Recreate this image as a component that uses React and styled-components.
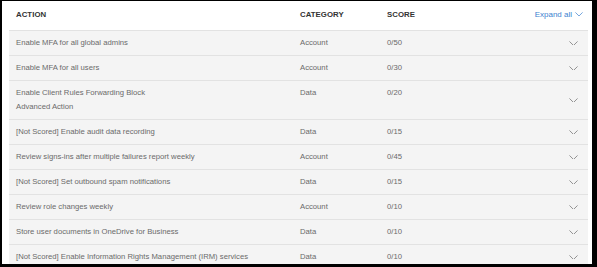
import React from "react";
import styled, { createGlobalStyle } from "styled-components";

const Global = createGlobalStyle`
  html, body { margin: 0; padding: 0; background: #000; }
  body { font-family: "Liberation Sans", Arial, Helvetica, sans-serif; }
  #root { width: 597px; height: 267px; overflow: hidden; }
`;

const Panel = styled.div`
  margin: 1px 5px 0 2px;
  height: 263px;
  background: #fff;
  padding: 0 4px 0 7px;
  overflow: hidden;
  box-sizing: border-box;
`;

const cols = "284px 87px 1fr 24px";

const Header = styled.div`
  display: grid;
  grid-template-columns: 284px 87px 1fr auto;
  align-items: center;
  height: 29px;
  padding: 0 0 2px 7px;
  box-sizing: border-box;
`;

const HeadCell = styled.div`
  font-size: 7.8px;
  font-weight: bold;
  color: #333;
  letter-spacing: 0.05px;
`;

const ExpandAll = styled.div`
  display: flex;
  align-items: center;
  gap: 3px;
  margin-right: 5px;
  color: #3d82cf;
  font-size: 8px;
`;

const Row = styled.div`
  display: grid;
  grid-template-columns: ${cols};
  align-items: start;
  background: #f4f4f4;
  border-top: 1px solid #e2e2e2;
  padding: 5px 0 5px 7px;
`;

const Cell = styled.div`
  font-size: 7.7px;
  line-height: 14px;
  color: #6a6a6a;
`;

const ActionCell = styled(Cell)`
  display: flex;
  flex-direction: column;
`;

const ChevronCell = styled.div`
  align-self: center;
  display: flex;
  justify-content: center;
  padding-right: 6px;
`;

const Chevron = ({ color = "#7a7a7a", w = 9 }) => (
  <svg width={w} height={w * 0.55} viewBox="0 0 10 5.5" fill="none">
    <path d="M0.5 0.5 L5 5 L9.5 0.5" stroke={color} strokeWidth="0.9" />
  </svg>
);

const rows = [
  { a: ["Enable MFA for all global admins"], c: "Account", s: "0/50" },
  { a: ["Enable MFA for all users"], c: "Account", s: "0/30" },
  { a: ["Enable Client Rules Forwarding Block", "Advanced Action"], c: "Data", s: "0/20" },
  { a: ["[Not Scored] Enable audit data recording"], c: "Data", s: "0/15" },
  { a: ["Review signs-ins after multiple failures report weekly"], c: "Account", s: "0/45" },
  { a: ["[Not Scored] Set outbound spam notifications"], c: "Data", s: "0/15" },
  { a: ["Review role changes weekly"], c: "Account", s: "0/10" },
  { a: ["Store user documents in OneDrive for Business"], c: "Data", s: "0/10" },
  { a: ["[Not Scored] Enable Information Rights Management (IRM) services"], c: "Data", s: "0/10" },
];

export default function App() {
  return (
    <>
      <Global />
      <Panel>
        <Header>
          <HeadCell>ACTION</HeadCell>
          <HeadCell>CATEGORY</HeadCell>
          <HeadCell>SCORE</HeadCell>
          <ExpandAll>
            Expand all <Chevron color="#3d82cf" w={8} />
          </ExpandAll>
        </Header>
        {rows.map((r, i) => (
          <Row key={i}>
            <ActionCell>
              {r.a.map((t) => (
                <span key={t}>{t}</span>
              ))}
            </ActionCell>
            <Cell>{r.c}</Cell>
            <Cell>{r.s}</Cell>
            <ChevronCell>
              <Chevron />
            </ChevronCell>
          </Row>
        ))}
      </Panel>
    </>
  );
}
